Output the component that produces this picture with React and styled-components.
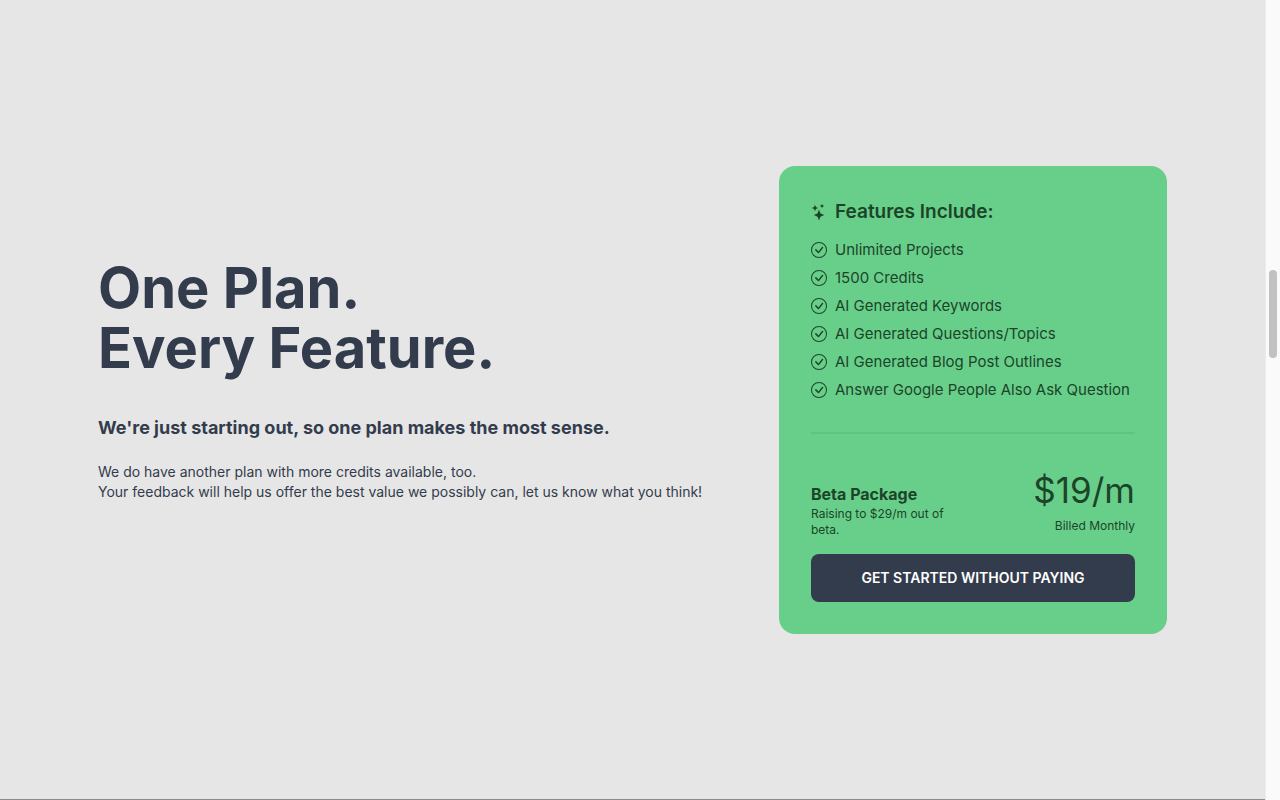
import React from 'react'
import styled, { createGlobalStyle } from 'styled-components';
import { BsStars, BsCheckCircle } from "react-icons/bs";

const features = [
  "Unlimited Projects",
  "1500 Credits",
  "AI Generated Keywords",
  "AI Generated Questions/Topics",
  "AI Generated Blog Post Outlines",
  "Answer Google People Also Ask Question",
]

const App = () => {
  return (
    <>
      <GlobalStyle />
      <Page>
        <Pricing>
          <Intro>
            <h1>One Plan.<br />Every Feature.</h1>
            <h2>We're just starting out, so one plan makes the most sense.</h2>
            <p>
              We do have another plan with more credits available, too.<br />
              Your feedback will help us offer the best value we possibly can, let us know what you think!
            </p>
          </Intro>
          <Card>
            <CardTitle><BsStars size={16} />Features Include:</CardTitle>
            <FeatureList>
              {features.map((feature) => (
                <Feature key={feature}><BsCheckCircle size={16} />{feature}</Feature>
              ))}
            </FeatureList>
            <Divider />
            <PriceRow>
              <Package>
                <h4>Beta Package</h4>
                <Small>Raising to $29/m out of beta.</Small>
              </Package>
              <Price>
                <Amount>$19/m</Amount>
                <Small>Billed Monthly</Small>
              </Price>
            </PriceRow>
            <StartButton type="button">Get started without paying</StartButton>
          </Card>
        </Pricing>
        <ScrollTrack>
          <ScrollThumb />
        </ScrollTrack>
      </Page>
    </>
  )
}

export default App

const GlobalStyle = createGlobalStyle`
  * {
    box-sizing: border-box;
    margin: 0;
    padding: 0;
  }
  body {
    font-family: Inter, "Liberation Sans", sans-serif;
    color: #333c4d;
    background: #e6e6e6;
  }
`

const Page = styled.div`
  display: flex;
  min-height: 100vh;
`

const Pricing = styled.section`
  flex: 1;
  display: flex;
  align-items: center;
  justify-content: space-between;
  gap: 32px;
  padding: 0 98px;
  border-bottom: 1px solid #8c8c8c;
`

const Intro = styled.div`
  padding-bottom: 40px;
  h1 {
    font-size: 56px;
    line-height: 60px;
    font-weight: 700;
  }
  h2 {
    margin: 36px 0 20px;
    font-size: 18px;
    line-height: 28px;
    font-weight: 700;
  }
  p {
    font-size: 14px;
    line-height: 20px;
  }
`

const Card = styled.div`
  display: flex;
  flex-direction: column;
  flex-shrink: 0;
  min-width: 388px;
  padding: 32px;
  border-radius: 16px;
  background: #68cf8a;
  color: #1c4429;
`

const CardTitle = styled.h3`
  display: flex;
  align-items: center;
  gap: 8px;
  font-size: 19px;
  line-height: 28px;
  font-weight: 600;
`

const FeatureList = styled.ul`
  margin-top: 10px;
  list-style: none;
`

const Feature = styled.li`
  display: flex;
  align-items: center;
  gap: 8px;
  font-size: 15px;
  line-height: 28px;
`

const Divider = styled.hr`
  height: 2px;
  margin: 28px 0 36px;
  border: 0;
  background: #5fc481;
`

const PriceRow = styled.div`
  display: flex;
  align-items: flex-end;
  justify-content: space-between;
`

const Package = styled.div`
  width: 160px;
  h4 {
    font-size: 16px;
    line-height: 24px;
    font-weight: 700;
  }
`

const Price = styled.div`
  display: flex;
  flex-direction: column;
  gap: 8px;
  padding-bottom: 4px;
  text-align: right;
`

const Amount = styled.p`
  font-size: 35px;
  line-height: 40px;
`

const Small = styled.p`
  font-size: 12px;
  line-height: 16px;
`

const StartButton = styled.button`
  height: 48px;
  margin-top: 16px;
  border: 0;
  border-radius: 8px;
  background: #333c4d;
  color: #fff;
  font-family: inherit;
  font-size: 14px;
  font-weight: 600;
  text-transform: uppercase;
  cursor: pointer;
`

const ScrollTrack = styled.div`
  width: 15px;
  padding: 270px 3px 0;
  border-left: 1px solid #ececec;
  background: #fafafa;
`

const ScrollThumb = styled.div`
  height: 88px;
  border-radius: 4px;
  background: #c1c1c1;
`
